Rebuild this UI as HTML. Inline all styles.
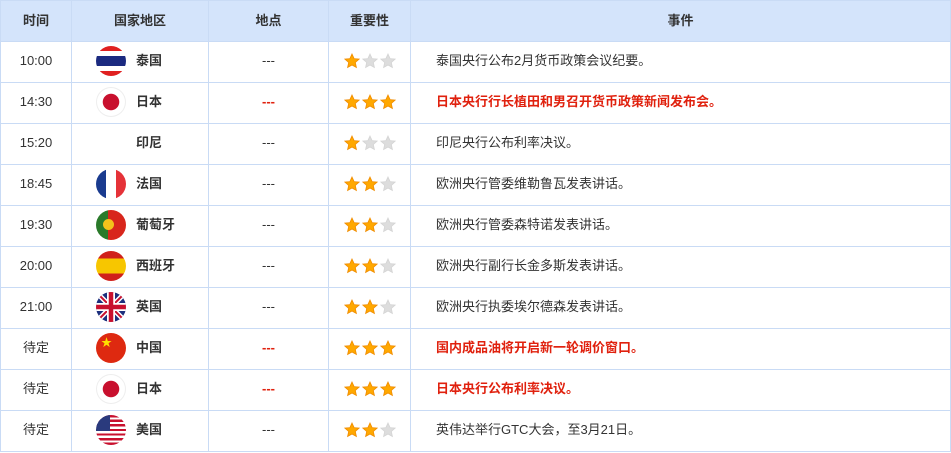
<!DOCTYPE html><html><head><meta charset="utf-8"><style>
body{margin:0;background:#fff;font-family:"Liberation Sans","Noto Sans CJK SC",sans-serif;font-size:13px;color:#333}
table{border-collapse:collapse;width:951px;table-layout:fixed}
td,th{border:1px solid #c9dbf5;height:38px;padding:0 0 2px;text-align:center;line-height:16px}
th{background:#d4e4fb;font-weight:bold;color:#333;height:40px;padding:0}
.c{display:flex;align-items:center;padding-left:24px;font-weight:bold}
.f{width:30px;height:30px;border-radius:50%;overflow:hidden;margin-right:10px;flex:none;position:relative}
.ev{text-align:left;padding-left:25px}
.red{color:#e0210e;font-weight:bold}
.s svg{width:16px;height:16px;margin:0 1px;vertical-align:top}
.y{fill:#ffa800;stroke:#f08c00;stroke-width:.8}
.g{fill:#ddd;stroke:#d4d4d4;stroke-width:.8}
</style></head><body>
<svg width="0" height="0" style="position:absolute"><defs><path id="st" d="M8 1l2.1 4.6 5 .5-3.8 3.4 1.1 5L8 12 3.6 14.5l1.1-5L.9 6.1l5-.5z"/></defs></svg>
<table>
<colgroup><col style="width:71px"><col style="width:137px"><col style="width:120px"><col style="width:82px"><col></colgroup>
<tr><th>时间</th><th>国家地区</th><th>地点</th><th>重要性</th><th>事件</th></tr>
<tr><td>10:00</td><td><div class="c"><div class="f" style="background:linear-gradient(#e02020 0 17%,#fff 17% 33%,#1b2a80 33% 67%,#fff 67% 83%,#e02020 83%)"></div>泰国</div></td><td>---</td><td class="s"><svg viewBox="0 0 16 16"><use href="#st" class="y"/></svg><svg viewBox="0 0 16 16"><use href="#st" class="g"/></svg><svg viewBox="0 0 16 16"><use href="#st" class="g"/></svg></td><td class="ev">泰国央行公布2月货币政策会议纪要。</td></tr>
<tr><td>14:30</td><td><div class="c"><div class="f" style="background:radial-gradient(circle,#c8102e 0 8px,#fff 8.5px);box-shadow:inset 0 0 0 1px #eee"></div>日本</div></td><td class="red">---</td><td class="s"><svg viewBox="0 0 16 16"><use href="#st" class="y"/></svg><svg viewBox="0 0 16 16"><use href="#st" class="y"/></svg><svg viewBox="0 0 16 16"><use href="#st" class="y"/></svg></td><td class="ev red">日本央行行长植田和男召开货币政策新闻发布会。</td></tr>
<tr><td>15:20</td><td><div class="c"><div class="f" style="background:#fff"></div>印尼</div></td><td>---</td><td class="s"><svg viewBox="0 0 16 16"><use href="#st" class="y"/></svg><svg viewBox="0 0 16 16"><use href="#st" class="g"/></svg><svg viewBox="0 0 16 16"><use href="#st" class="g"/></svg></td><td class="ev">印尼央行公布利率决议。</td></tr>
<tr><td>18:45</td><td><div class="c"><div class="f" style="background:linear-gradient(90deg,#1a3b8f 0 33%,#fff 33% 67%,#e53238 67%)"></div>法国</div></td><td>---</td><td class="s"><svg viewBox="0 0 16 16"><use href="#st" class="y"/></svg><svg viewBox="0 0 16 16"><use href="#st" class="y"/></svg><svg viewBox="0 0 16 16"><use href="#st" class="g"/></svg></td><td class="ev">欧洲央行管委维勒鲁瓦发表讲话。</td></tr>
<tr><td>19:30</td><td><div class="c"><div class="f" style="background:linear-gradient(90deg,#2a7a2a 0 40%,#d8261c 40%)"><div style="position:absolute;left:7px;top:9px;width:11px;height:11px;border-radius:50%;background:#f3c21b"></div></div>葡萄牙</div></td><td>---</td><td class="s"><svg viewBox="0 0 16 16"><use href="#st" class="y"/></svg><svg viewBox="0 0 16 16"><use href="#st" class="y"/></svg><svg viewBox="0 0 16 16"><use href="#st" class="g"/></svg></td><td class="ev">欧洲央行管委森特诺发表讲话。</td></tr>
<tr><td>20:00</td><td><div class="c"><div class="f" style="background:linear-gradient(#d0201b 0 25%,#f7c600 25% 75%,#d0201b 75%)"></div>西班牙</div></td><td>---</td><td class="s"><svg viewBox="0 0 16 16"><use href="#st" class="y"/></svg><svg viewBox="0 0 16 16"><use href="#st" class="y"/></svg><svg viewBox="0 0 16 16"><use href="#st" class="g"/></svg></td><td class="ev">欧洲央行副行长金多斯发表讲话。</td></tr>
<tr><td>21:00</td><td><div class="c"><div class="f" style="background:#1c2f7d"><svg width="30" height="30" style="position:absolute;left:0;top:0"><path d="M0 0L30 30M30 0L0 30" stroke="#fff" stroke-width="5"/><path d="M0 0L30 30M30 0L0 30" stroke="#c8102e" stroke-width="2"/><path d="M15 0V30M0 15H30" stroke="#fff" stroke-width="8"/><path d="M15 0V30M0 15H30" stroke="#c8102e" stroke-width="4.5"/></svg></div>英国</div></td><td>---</td><td class="s"><svg viewBox="0 0 16 16"><use href="#st" class="y"/></svg><svg viewBox="0 0 16 16"><use href="#st" class="y"/></svg><svg viewBox="0 0 16 16"><use href="#st" class="g"/></svg></td><td class="ev">欧洲央行执委埃尔德森发表讲话。</td></tr>
<tr><td>待定</td><td><div class="c"><div class="f" style="background:#de2910"><span style="position:absolute;left:5px;top:5px;color:#ffde00;font-size:11px;line-height:11px">★</span></div>中国</div></td><td class="red">---</td><td class="s"><svg viewBox="0 0 16 16"><use href="#st" class="y"/></svg><svg viewBox="0 0 16 16"><use href="#st" class="y"/></svg><svg viewBox="0 0 16 16"><use href="#st" class="y"/></svg></td><td class="ev red">国内成品油将开启新一轮调价窗口。</td></tr>
<tr><td>待定</td><td><div class="c"><div class="f" style="background:radial-gradient(circle,#c8102e 0 8px,#fff 8.5px);box-shadow:inset 0 0 0 1px #eee"></div>日本</div></td><td class="red">---</td><td class="s"><svg viewBox="0 0 16 16"><use href="#st" class="y"/></svg><svg viewBox="0 0 16 16"><use href="#st" class="y"/></svg><svg viewBox="0 0 16 16"><use href="#st" class="y"/></svg></td><td class="ev red">日本央行公布利率决议。</td></tr>
<tr><td>待定</td><td><div class="c"><div class="f" style="background:repeating-linear-gradient(#c8102e 0 2.3px,#fff 2.3px 4.6px)"><div style="position:absolute;left:0;top:0;width:14px;height:16px;background:#2a3a7d"></div></div>美国</div></td><td>---</td><td class="s"><svg viewBox="0 0 16 16"><use href="#st" class="y"/></svg><svg viewBox="0 0 16 16"><use href="#st" class="y"/></svg><svg viewBox="0 0 16 16"><use href="#st" class="g"/></svg></td><td class="ev">英伟达举行GTC大会，至3月21日。</td></tr>
</table></body></html>
